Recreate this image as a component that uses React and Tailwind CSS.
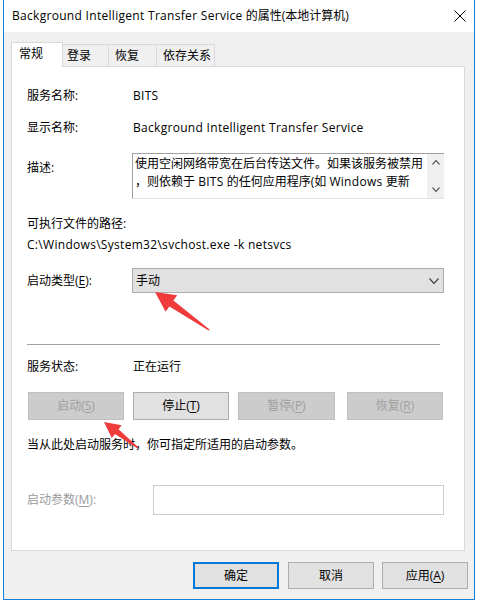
import React from "react";

const U = ({ children }) => <span className="underline underline-offset-[2px]">{children}</span>;
const L = ({ children }) => <span className="tracking-[0.3px]">{children}</span>;

function Row({ label, children, className = "" }) {
  return (
    <div className={"flex items-center h-[20px] " + className}>
      <div className="w-[106px] shrink-0">{label}</div>
      <div>{children}</div>
    </div>
  );
}

function Chevron({ dir = "down", w = 9, h = 5, color = "#606060" }) {
  const d = dir === "down" ? `M0.5 0.5 L${w / 2} ${h - 0.5} L${w - 0.5} 0.5` : `M0.5 ${h - 0.5} L${w / 2} 0.5 L${w - 0.5} ${h - 0.5}`;
  return (
    <svg width={w} height={h} viewBox={`0 0 ${w} ${h}`}>
      <path d={d} fill="none" stroke={color} strokeWidth="1.2" />
    </svg>
  );
}

function Btn({ children, disabled, w = "w-[96px]", className = "" }) {
  return (
    <div
      className={
        "h-[28px] flex items-center justify-center border " +
        w +
        " " +
        (disabled ? "bg-[#cccccc] border-[#bfbfbf] text-[#a0a0a0] " : "bg-[#e1e1e1] border-[#adadad] text-black ") +
        className
      }
    >
      {children}
    </div>
  );
}

export default function App() {
  return (
    <div className="relative w-[478px] h-[602px] bg-white text-[12px] leading-[16px] text-black font-['Open_Sans','Noto_Sans_CJK_SC',sans-serif] overflow-hidden">
      <div className="ml-[3px] w-[472px] h-[600px] border-x border-b border-[#1a7fd4] bg-[#f0f0f0] flex flex-col">
        {/* title bar */}
        <div className="h-[32px] bg-white flex items-center justify-between pl-[8px] pr-[8px]">
          <span>
            <L>Background Intelligent Transfer Service</L> 的属性(本地计算机)
          </span>
          <svg width="12" height="12" viewBox="0 0 12 12">
            <path d="M0.5 0.5 L11.5 11.5 M11.5 0.5 L0.5 11.5" stroke="#000" strokeWidth="1" />
          </svg>
        </div>

        {/* tabs */}
        <div className="mt-[10px] ml-[7px] flex items-end h-[24px] relative z-10">
          <div className="w-[52px] h-[25px] -mb-px bg-white border-t border-x border-[#d9d9d9] flex items-center pl-[7px] pb-[2px]">
            常规
          </div>
          <div className="w-[46px] h-[22px] border-t border-r border-[#d9d9d9] flex items-center pl-[4px]">登录</div>
          <div className="w-[48px] h-[22px] border-t border-r border-[#d9d9d9] flex items-center pl-[6px]">恢复</div>
          <div className="w-[58px] h-[22px] border-t border-r border-[#d9d9d9] flex items-center pl-[6px]">依存关系</div>
        </div>

        {/* panel */}
        <div className="ml-[7px] w-[454px] h-[485px] bg-white border border-[#d9d9d9] pl-[15px] flex flex-col">
          <Row label="服务名称:" className="mt-[19px]">
            <L>BITS</L>
          </Row>
          <Row label="显示名称:" className="mt-[12px]">
            <L>Background Intelligent Transfer Service</L>
          </Row>

          <div className="mt-[15px] flex">
            <div className="w-[105px] shrink-0 h-[20px] mt-[5px] flex items-center">描述:</div>
            <div className="w-[312px] h-[46px] border-t border-l border-[#a0a0a0] border-b border-b-[#e3e3e3] flex">
              <div className="flex-1 pl-[2px] pt-[1px] leading-[18px] overflow-hidden whitespace-nowrap">
                <div>使用空闲网络带宽在后台传送文件。如果该服务被禁用</div>
                <div>
                  ，则依赖于 <L>BITS</L> 的任何应用程序(如 <L>Windows</L> 更新
                </div>
              </div>
              <div className="w-[17px] bg-[#f0f0f0] flex flex-col justify-between items-center">
                <div className="h-[17px] flex items-center justify-center">
                  <Chevron dir="up" w={8} h={5} />
                </div>
                <div className="h-[17px] flex items-center justify-center">
                  <Chevron dir="down" w={8} h={5} />
                </div>
              </div>
            </div>
          </div>

          <div className="mt-[15px] h-[20px] flex items-center">可执行文件的路径:</div>
          <div className="mt-[1px] h-[20px] flex items-center">
            <L>C:\Windows\System32\svchost.exe -k netsvcs</L>
          </div>

          <div className="mt-[13px] flex items-center">
            <div className="w-[105px] shrink-0">
              启动类型(<U>E</U>):
            </div>
            <div className="w-[312px] h-[25px] bg-[#e1e1e1] border border-[#adadad] flex items-center justify-between pl-[3px] pr-[4px]">
              <span>手动</span>
              <Chevron dir="down" w={10} h={6} color="#444" />
            </div>
          </div>

          <div className="mt-[51px] w-[413px] h-px bg-[#a0a0a0]" />

          <Row label="服务状态:" className="mt-[12px]">正在运行</Row>

          <div className="mt-[15px] ml-px flex">
            <Btn disabled>
              启动(<U>S</U>)
            </Btn>
            <Btn className="ml-[9px]">
              停止(<U>T</U>)
            </Btn>
            <Btn disabled w="w-[97px]" className="ml-[9px]">
              暂停(<U>P</U>)
            </Btn>
            <Btn disabled className="ml-[12px]">
              恢复(<U>R</U>)
            </Btn>
          </div>

          <div className="mt-[15px] h-[20px] flex items-center">当从此处启动服务时，你可指定所适用的启动参数。</div>

          <div className="mt-[30px] flex items-center">
            <div className="w-[126px] shrink-0 text-[#9a9a9a]">
              启动参数(<U>M</U>):
            </div>
            <div className="w-[291px] h-[30px] border border-[#cccccc] bg-white" />
          </div>
        </div>

        {/* bottom buttons */}
        <div className="mt-[11px] flex justify-end pr-[6px]">
          <div className="w-[86px] h-[27px] border-2 border-[#0078d7] bg-[#e1e1e1] flex items-center justify-center">确定</div>
          <div className="ml-[9px] w-[86px] h-[27px] border border-[#adadad] bg-[#e1e1e1] flex items-center justify-center">取消</div>
          <div className="ml-[8px] w-[86px] h-[27px] border border-[#adadad] bg-[#e1e1e1] flex items-center justify-center">
            应用(<U>A</U>)
          </div>
        </div>
      </div>

      {/* red annotation arrows */}
      <svg className="absolute left-0 top-0 pointer-events-none" width="478" height="602" viewBox="0 0 478 602">
        <polygon
          points="155,292 177.2,295.3 173.4,300.6 209.6,329.4 208.6,330.6 169.4,306.4 165.6,311.7"
          fill="#ef3b3b"
        />
        <polygon
          points="104,422 121.6,425.3 118.5,429.3 138.5,447.4 137.6,448.6 114.9,434.1 111.8,438.1"
          fill="#ef3b3b"
        />
      </svg>
    </div>
  );
}
